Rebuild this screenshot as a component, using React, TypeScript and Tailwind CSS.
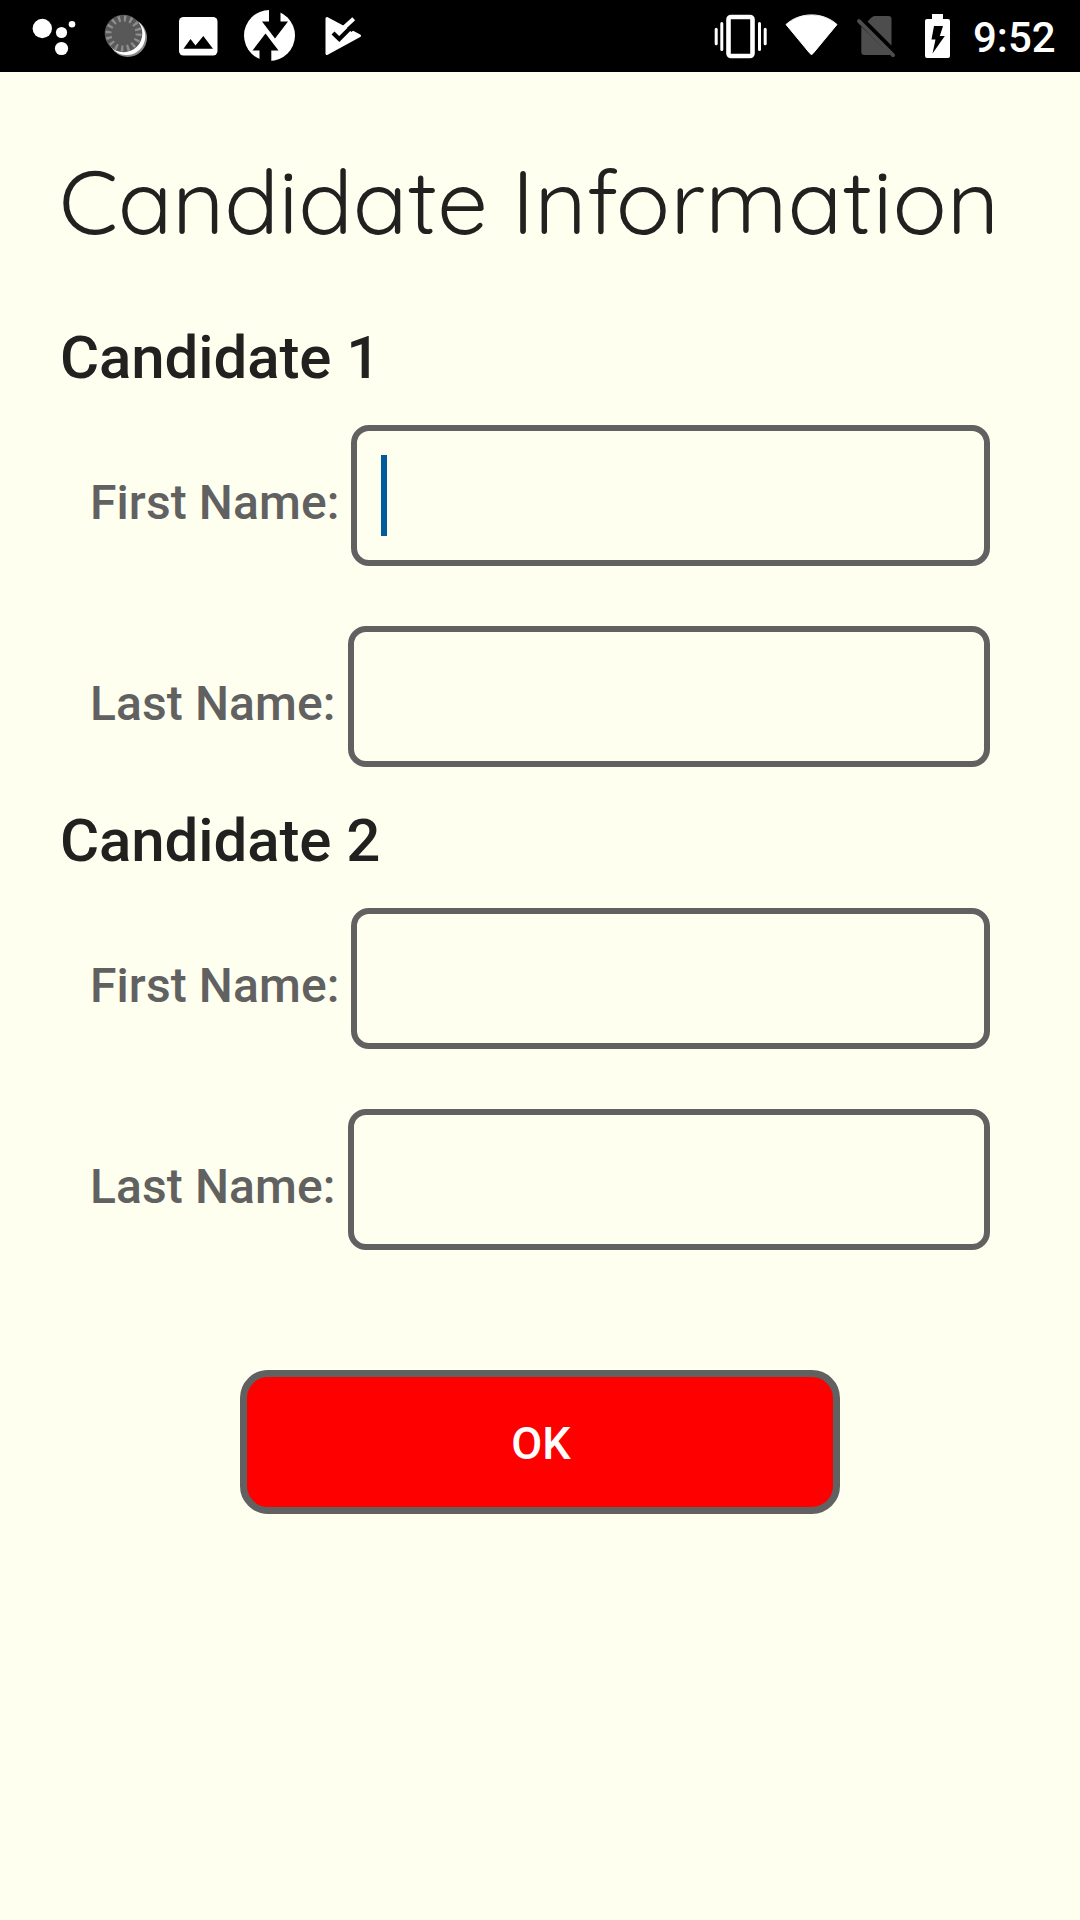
import React from "react";

function StatusBar() {
  return (
    <header className="flex h-[72px] w-full items-center bg-black">
      <svg className="h-[72px] w-[380px]" viewBox="0 0 380 72" fill="none">
        <g fill="#fff">
          <circle cx="42.3" cy="28.5" r="9.7" />
          <circle cx="61.5" cy="32.5" r="5.6" />
          <circle cx="72" cy="24.3" r="3.3" />
          <circle cx="61.5" cy="48.5" r="6.6" />
        </g>
        <circle cx="127.8" cy="37.7" r="19.2" fill="#8a8a8a" />
        <circle cx="126.5" cy="36.3" r="18.8" fill="#fff" />
        <circle cx="123.5" cy="33.5" r="18.8" fill="#585858" />
        <circle cx="123.5" cy="33.5" r="15" stroke="#8e8e8e" strokeWidth="6" strokeDasharray="2.3 3.59" />
        <rect x="179" y="17" width="38.5" height="38.5" rx="4.5" fill="#fff" />
        <path d="M183.5 48.7 190.5 39 195.5 45.5 203.3 36 213 48.7Z" fill="#000" />
        <circle cx="269.5" cy="35.5" r="25.5" fill="#fff" />
        <path d="M269 9H280.5V21.5H288L275 38.5 262 21.5H269ZM259.5 62V50.5H252.5L265.5 33.5 278.5 50.5H271.3V62Z" fill="#000" />
        <path d="M327 18.5 359.5 35.8 327 53.5Z" fill="#fff" stroke="#fff" strokeWidth="3" strokeLinejoin="round" />
        <path d="m343.5 25 9-9h9l-1 8-9 8Z" fill="#000" />
        <path d="m333 33 6.3 6L351.5 26.8" stroke="#000" strokeWidth="4.2" />
        <path d="m344.3 27.4 9.4-8.6" stroke="#fff" strokeWidth="4.2" />
      </svg>
      <svg className="ml-auto h-[72px] w-[240px]" viewBox="710 0 240 72" fill="none">
        <g stroke="#fff">
          <rect x="728.5" y="17" width="24" height="39" rx="2.5" strokeWidth="4.6" />
          <path d="M716.2 29.3v14.4M765.2 29.3v14.4M721.8 23.5v26M759.5 23.5v26" strokeWidth="3" strokeLinecap="round" />
        </g>
        <path d="M786 24.5C800 11.7 823 11.7 837 24.5L813 53.5q-1.5 2-3 0Z" fill="#fff" stroke="#fff" strokeWidth="1" strokeLinejoin="round" />
        <path d="M867.5 21.5l4-4q1.5-1.5 3-1.5h14q3 0 3 3v26.5Z" fill="#4d4d4d" />
        <path d="M861.3 26.5V52q0 3 3 3h24.5q1 0 1.5-.4Z" fill="#4d4d4d" />
        <path d="M859 21.2 893 55.2" stroke="#4d4d4d" strokeWidth="4" strokeLinecap="round" />
        <path d="M932 14h11v5h5q2 0 2 2V56q0 2-2 2H927q-2 0-2-2V21q0-2 2-2h5Z" fill="#fff" />
        <path d="M934 26h9l-3.2 10h5L932.5 53.5 935.5 39.5h-4Z" fill="#000" />
      </svg>
      <span className="mt-[3px] w-[130px] pl-[23px] text-[42px] leading-[48px] font-medium text-white">9:52</span>
    </header>
  );
}

function Field({ label, active }: { label: string; active?: boolean }) {
  return (
    <label className="flex h-[141px] items-center pr-[90px] pl-[90px]">
      <span className="mt-[15px] mr-[12px] shrink-0 text-[48px] leading-[56px] font-medium tracking-[0.1px] text-[#616161]">{label}</span>
      <span className="flex h-full flex-1 items-center rounded-[18px] border-6 border-[#616161] pl-6">
        {active && <span className="h-[81px] w-[6px] bg-[#005a9c]" />}
      </span>
    </label>
  );
}

function Candidate({ number, active }: { number: number; active?: boolean }) {
  return (
    <section className="h-[483px]">
      <h2 className="pl-[60px] text-[60px] leading-[70px] font-medium tracking-[-0.1px]">Candidate {number}</h2>
      <div className="mt-[32px] flex flex-col gap-[60px]">
        <Field label="First Name:" active={active} />
        <Field label="Last Name:" />
      </div>
    </section>
  );
}

export default function App() {
  return (
    <div className="h-[1920px] w-[1080px] overflow-hidden bg-[#fffff0] font-['Roboto',sans-serif] text-[#21211f]">
      <StatusBar />
      <main className="flex flex-col">
        <h1 className="mt-[75px] h-[108px] pl-[59px] font-['Quicksand','Inter',sans-serif] text-[90px] leading-[108px] font-normal whitespace-nowrap [word-spacing:-1px]">
          Candidate <span className="tracking-[0.2px]">Information</span>
        </h1>
        <div className="mt-[68px]">
          <Candidate number={1} active />
          <Candidate number={2} />
        </div>
        <button className="mt-[81px] h-[144px] w-[600px] self-center rounded-[28px] border-7 border-[#616161] bg-[#ff0000] pt-[3px] pl-[2px] text-[45px] font-medium text-white">
          OK
        </button>
      </main>
    </div>
  );
}
